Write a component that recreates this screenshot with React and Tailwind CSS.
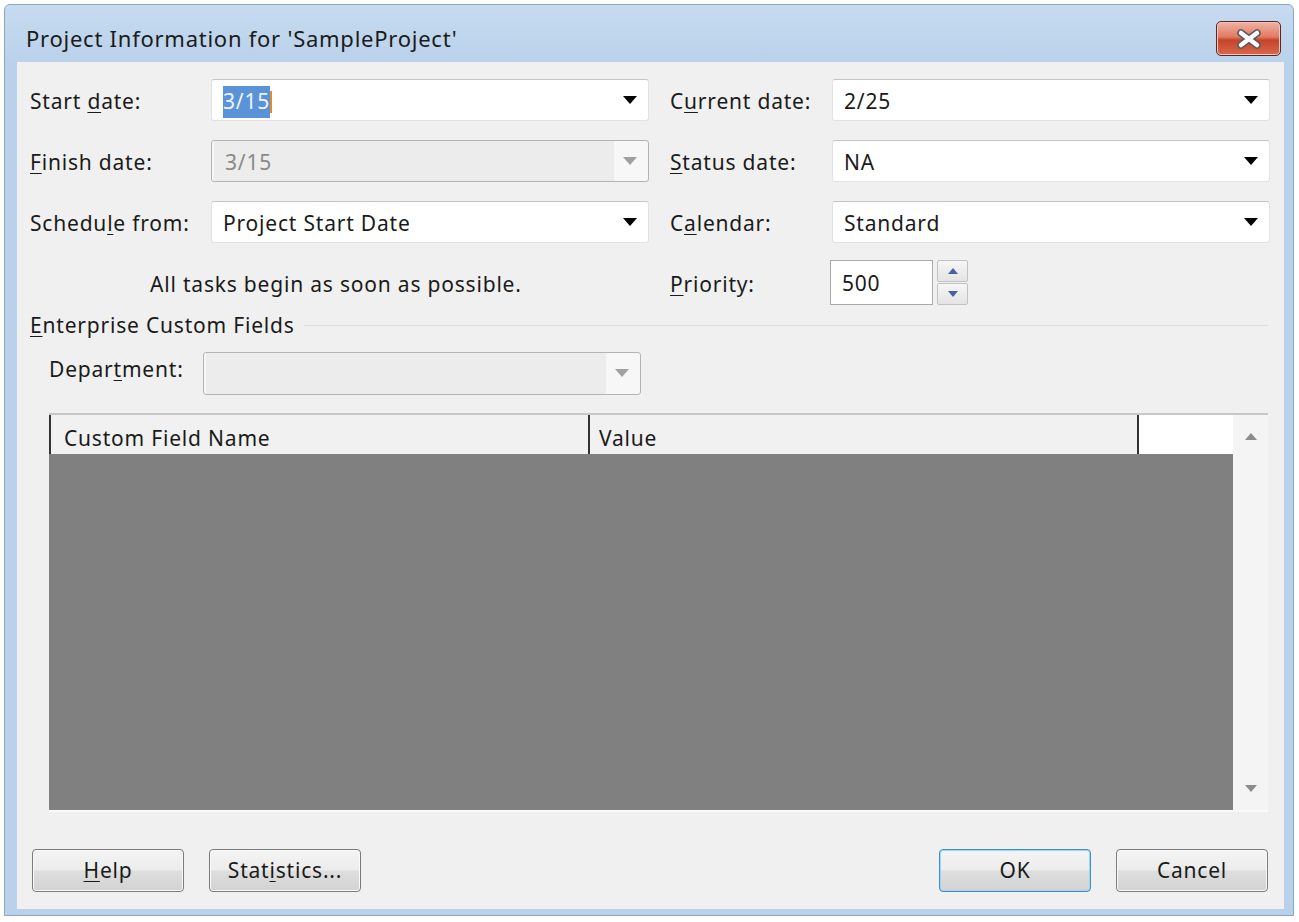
import React from 'react'

const font = { fontFamily: '"Noto Sans", "Open Sans", sans-serif' }

function U({ children }) {
  return <span className="underline decoration-1 underline-offset-[3px]">{children}</span>
}

function Arrow({ disabled }) {
  return (
    <svg width="14" height="8" viewBox="0 0 14 8" className="shrink-0">
      <path d="M0 0 L14 0 L7 8 Z" fill={disabled ? '#a0a0a0' : '#000'} />
    </svg>
  )
}

function Combo({ children, disabled, className = '' }) {
  return (
    <div
      className={
        'flex h-[42px] items-center rounded-[3px] border ' +
        (disabled
          ? 'border-[#b4b4b4] bg-[#f7f7f7] '
          : 'border-[#e2e2e2] border-t-[#c4c4c4] bg-white ') +
        className
      }
    >
      <div
        className={
          'flex h-full flex-1 items-center pl-[11px] pt-[4px] ' +
          (disabled ? 'my-[4px] ml-[2px] h-[34px] bg-[#ececec] text-[#8a8a8a]' : 'text-[#1a1a1a]')
        }
      >
        {children}
      </div>
      <div className="flex w-[34px] items-center justify-center pr-[3px]">
        <Arrow disabled={disabled} />
      </div>
    </div>
  )
}

function Label({ children, className = '' }) {
  return <div className={'pt-[4px] text-[#1a1a1a] ' + className}>{children}</div>
}

function Button({ children, primary }) {
  return (
    <button
      className={
        'h-[43px] w-[152px] rounded-[4px] border pt-[2px] text-[#1a1a1a] ' +
        (primary
          ? 'border-[#3c8fc8] shadow-[inset_0_0_0_1px_#9ed6f5] '
          : 'border-[#7a7a7a] shadow-[inset_0_0_0_1px_#fbfbfb] ') +
        'bg-[linear-gradient(#f4f4f4_0%,#ececec_48%,#dedede_52%,#d2d2d2_100%)]'
      }
    >
      {children}
    </button>
  )
}

export default function App() {
  return (
    <div className="h-[922px] w-[1299px] bg-white pl-[4px] pt-[4px]" style={font}>
      <div className="flex h-[912px] w-[1290px] flex-col rounded-t-[6px] border border-[#8aa6c4] bg-[linear-gradient(#c6dbf0,#b9d1ea_60px)] pl-[12px] pr-[9px] pb-[6px]">
        {/* Title bar */}
        <div className="flex h-[57px] shrink-0 justify-between">
          <div className="self-center pl-[9px] pt-[9px] text-[22px] tracking-[0.75px] text-[#1b1b1b]">
            Project Information for 'SampleProject'
          </div>
          <div className="mr-[3px] mt-[16px] flex h-[35px] w-[65px] items-center justify-center rounded-[5px] border border-[#5a2626] bg-[linear-gradient(#f0b3a3_0%,#e27a62_45%,#c5442a_55%,#d8694e_100%)] shadow-[inset_0_0_0_1px_#f3c6b9]">
            <svg width="28" height="20" viewBox="0 0 28 20">
              <path d="M6 4 L22 16 M22 4 L6 16" stroke="#5a5a5a" strokeWidth="7.5" strokeLinecap="round" />
              <path d="M6 4 L22 16 M22 4 L6 16" stroke="#fff" strokeWidth="4.5" strokeLinecap="round" />
            </svg>
          </div>
        </div>

        {/* Client */}
        <div className="flex flex-1 flex-col bg-[#f0f0f0] pl-[13px] pr-[14px] pt-[17px] text-[21px] tracking-[0.8px]">
          {/* Row 1 */}
          <div className="flex items-center">
            <Label className="w-[181px]">
              Start <U>d</U>ate:
            </Label>
            <Combo className="w-[438px]">
              <span className="bg-[#5b93d9] text-[#eef4fc]">3/15</span>
              <span className="inline-block h-[22px] w-[2px] bg-[#e08a2c]" />
            </Combo>
            <Label className="ml-[21px] w-[162px]">
              C<U>u</U>rrent date:
            </Label>
            <Combo className="w-[438px]">2/25</Combo>
          </div>

          {/* Row 2 */}
          <div className="mt-[19px] flex items-center">
            <Label className="w-[181px]">
              <U>F</U>inish date:
            </Label>
            <Combo disabled className="w-[438px]">
              3/15
            </Combo>
            <Label className="ml-[21px] w-[162px]">
              <U>S</U>tatus date:
            </Label>
            <Combo className="w-[438px]">NA</Combo>
          </div>

          {/* Row 3 */}
          <div className="mt-[19px] flex items-center">
            <Label className="w-[181px]">
              Schedu<U>l</U>e from:
            </Label>
            <Combo className="w-[438px]">Project Start Date</Combo>
            <Label className="ml-[21px] w-[162px]">
              C<U>a</U>lendar:
            </Label>
            <Combo className="w-[438px]">Standard</Combo>
          </div>

          {/* Row 4 */}
          <div className="mt-[17px] flex h-[45px] items-center">
            <div className="w-[619px] pl-[120px] pt-[4px] text-[#1a1a1a]">All tasks begin as soon as possible.</div>
            <Label className="ml-[21px] w-[160px]">
              <U>P</U>riority:
            </Label>
            <div className="flex h-[45px] w-[103px] items-center border border-[#a9a9a9] bg-white pl-[11px] pt-[3px] text-[#1a1a1a]">
              500
            </div>
            <div className="ml-[4px] flex h-[45px] w-[31px] flex-col gap-[1px]">
              <div className="flex flex-1 items-center justify-center rounded-[2px] border border-[#c2c2c2] bg-[linear-gradient(#f6f6f6,#e4e4e4)]">
                <svg width="10" height="6" viewBox="0 0 10 6">
                  <path d="M0 6 L10 6 L5 0 Z" fill="#4a5fa8" />
                </svg>
              </div>
              <div className="flex flex-1 items-center justify-center rounded-[2px] border border-[#c2c2c2] bg-[linear-gradient(#f6f6f6,#e4e4e4)]">
                <svg width="10" height="6" viewBox="0 0 10 6">
                  <path d="M0 0 L10 0 L5 6 Z" fill="#4a5fa8" />
                </svg>
              </div>
            </div>
          </div>

          {/* Group header */}
          <div className="mt-[5px] flex items-center">
            <div className="text-[#1a1a1a]">
              <U>E</U>nterprise Custom Fields
            </div>
            <div className="ml-[9px] mr-[2px] h-px flex-1 border-b border-[#d5dfe5] bg-[#c9d3dc]" />
          </div>

          {/* Department */}
          <div className="mt-[10px] flex items-start pl-[19px]">
            <div className="w-[154px] pt-[2px] text-[#1a1a1a]">
              Depar<U>t</U>ment:
            </div>
            <Combo disabled className="h-[43px] w-[438px]">
              {''}
            </Combo>
          </div>

          {/* Table */}
          <div className="ml-[19px] mt-[18px] flex h-[399px] w-[1219px] border-t-2 border-b-2 border-[#c8c8c8] border-b-[#fafafa]">
            <div className="flex flex-1 flex-col">
              <div className="flex h-[39px] shrink-0">
                <div className="flex w-[539px] items-center border-l-2 border-[#333] bg-[#f1f1f1] pl-[13px] pt-[9px] text-[#1a1a1a]">
                  Custom Field Name
                </div>
                <div className="flex w-[549px] items-center border-l-2 border-[#333] bg-[#f1f1f1] pl-[9px] pt-[9px] text-[#1a1a1a]">
                  Value
                </div>
                <div className="flex-1 border-l-2 border-[#333] bg-white" />
              </div>
              <div className="flex-1 bg-[#808080]" />
            </div>
            <div className="flex w-[35px] flex-col items-center justify-between bg-[#f4f4f4] py-[18px]">
              <svg width="12" height="7" viewBox="0 0 12 7">
                <path d="M0 7 L12 7 L6 0 Z" fill="#8c8c8c" />
              </svg>
              <svg width="12" height="7" viewBox="0 0 12 7">
                <path d="M0 0 L12 0 L6 7 Z" fill="#8c8c8c" />
              </svg>
            </div>
          </div>

          {/* Buttons */}
          <div className="mt-[37px] flex items-center pl-[2px] pr-[2px]">
            <Button>
              <U>H</U>elp
            </Button>
            <div className="ml-[25px]">
              <Button>
                Stat<U>i</U>stics...
              </Button>
            </div>
            <div className="ml-auto flex gap-[25px]">
              <Button primary>OK</Button>
              <Button>Cancel</Button>
            </div>
          </div>
        </div>
      </div>
    </div>
  )
}
